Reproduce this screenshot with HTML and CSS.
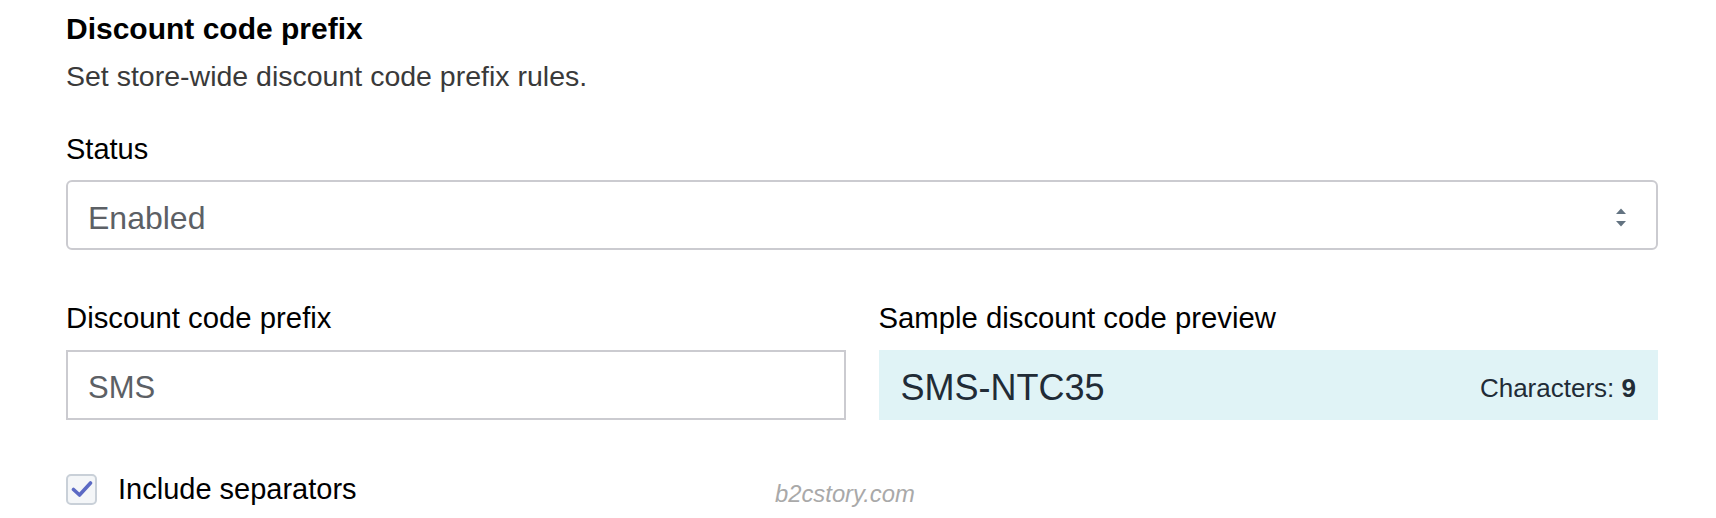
FILE: index.html
```html
<!DOCTYPE html>
<html lang="en">
<head>
<meta charset="utf-8">
<title>Discount code prefix</title>
<link rel="stylesheet" href="styles.css">
</head>
<body>
<div class="page">
  <h1 class="title">Discount code prefix</h1>
  <p class="desc">Set store-wide discount code prefix rules.</p>

  <div class="field">
    <div class="label">Status</div>
    <div class="select">
      <span class="select-value">Enabled</span>
      <svg class="select-arrows" width="10" height="20" viewBox="0 0 10 20" aria-hidden="true">
        <path d="M5 0.5 L10 6 L0 6 Z" fill="#637381"/>
        <path d="M0 13 L10 13 L5 18.5 Z" fill="#637381"/>
      </svg>
    </div>
  </div>

  <div class="row">
    <div class="col">
      <div class="label">Discount code prefix</div>
      <div class="input">SMS</div>
    </div>
    <div class="col">
      <div class="label">Sample discount code preview</div>
      <div class="preview">
        <span class="preview-code">SMS-NTC35</span>
        <span class="preview-count">Characters: <b>9</b></span>
      </div>
    </div>
  </div>

  <div class="check-row">
    <span class="checkbox">
      <svg width="22" height="18" viewBox="0 0 22 18" aria-hidden="true">
        <path d="M2.5 9.5 L8.5 15 L19.5 3" fill="none" stroke="#5c6ac4" stroke-width="3.6" stroke-linecap="round" stroke-linejoin="round"/>
      </svg>
    </span>
    <span class="check-label">Include separators</span>
  </div>

  <div class="watermark">b2cstory.com</div>
</div>
</body>
</html>
```

FILE: styles.css
```css
* { box-sizing: border-box; }

html, body {
  margin: 0;
  padding: 0;
  background: #ffffff;
}

body {
  font-family: "Liberation Sans", Arial, Helvetica, sans-serif;
  color: #000000;
}

.page {
  position: relative;
  width: 1716px;
  height: 518px;
  padding: 11px 58px 0 66px;
  overflow: hidden;
}

.title {
  margin: 0;
  font-size: 30px;
  line-height: 36px;
  font-weight: bold;
  color: #000000;
}

.desc {
  margin: 12px 0 0 0;
  font-size: 28.5px;
  line-height: 34px;
  color: #3a3a3a;
}

.field {
  margin-top: 39px;
}

.label {
  font-size: 29.3px;
  line-height: 34px;
  color: #000000;
}

.field .label {
  font-size: 29px;
}

.select {
  margin-top: 14px;
  height: 70px;
  border: 2px solid #cbcbd0;
  border-radius: 6px;
  display: flex;
  align-items: center;
  justify-content: space-between;
  padding: 6px 30px 0 20px;
}

.select-value {
  font-size: 32px;
  color: #5c6065;
}

.select-arrows {
  display: block;
}

.row {
  margin-top: 51px;
  display: grid;
  grid-template-columns: 1fr 1fr;
  column-gap: 33px;
}

.input {
  margin-top: 15px;
  height: 70px;
  border: 2px solid #cbcbd0;
  display: flex;
  align-items: center;
  padding: 5px 20px 0 20px;
  font-size: 31px;
  color: #5c6065;
}

.preview {
  margin-top: 15px;
  height: 70px;
  background: #e0f3f6;
  display: flex;
  align-items: center;
  justify-content: space-between;
  padding: 6px 22px 0 22px;
  color: #212b36;
}

.preview-code {
  font-size: 36px;
}

.preview-count {
  font-size: 26px;
}

.preview-count b {
  font-weight: bold;
}

.check-row {
  margin-top: 52px;
  display: flex;
  align-items: center;
  gap: 21px;
}

.checkbox {
  width: 31px;
  height: 31px;
  border: 2px solid #c9d0d8;
  border-radius: 5px;
  background: #f4f6f8;
  display: flex;
  align-items: center;
  justify-content: center;
}

.checkbox svg {
  display: block;
}

.check-label {
  font-size: 29px;
  line-height: 34px;
  color: #000000;
}

.watermark {
  position: absolute;
  left: 775px;
  top: 480px;
  font-size: 23.8px;
  font-style: italic;
  color: #a9a9a9;
}
```
